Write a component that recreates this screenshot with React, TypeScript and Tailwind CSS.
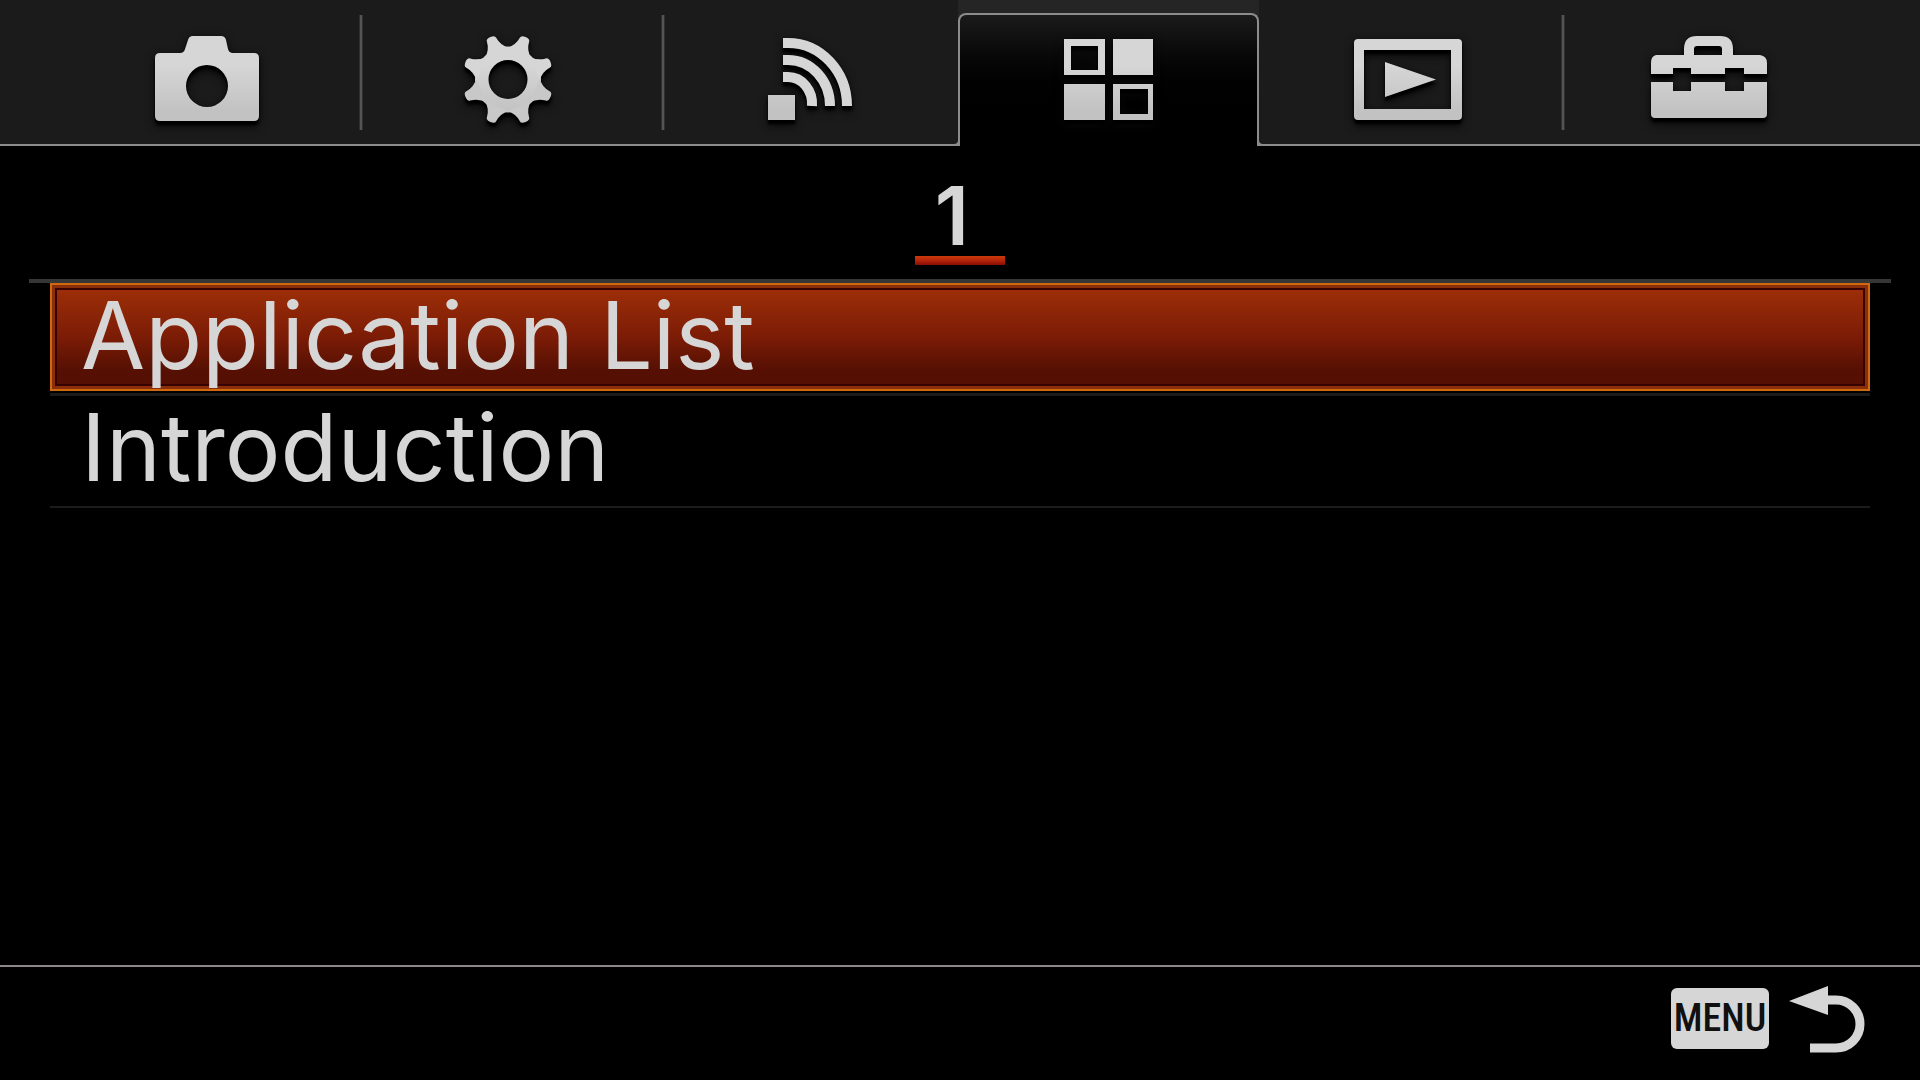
import type { ReactNode } from "react";

const TEETH = [22.5, 67.5, 112.5, 157.5, 202.5, 247.5, 292.5, 337.5];

function TabIcon({ id, children }: { id: string; children: ReactNode }) {
  return (
    <svg
      aria-hidden="true"
      viewBox="0 0 128 104"
      className="h-[104px] w-32 overflow-visible [filter:drop-shadow(0_4px_1px_#000000)_drop-shadow(0_2px_4px_#080808)]"
    >
      <defs>
        <linearGradient id={id} gradientUnits="userSpaceOnUse" x1="0" y1="40" x2="0" y2="86">
          <stop offset="0" stopColor="#d6d6d6" />
          <stop offset="1" stopColor="#c2c2c2" />
        </linearGradient>
      </defs>
      <g fill={`url(#${id})`} fillRule="evenodd">
        {children}
      </g>
    </svg>
  );
}

const TABS: { name: string; icon: ReactNode }[] = [
  {
    name: "Camera Settings",
    icon: (
      <TabIcon id="tab-camera">
        <path d="M17 28H37Q41 28 42 24L45 15Q46 11 50 11H78Q82 11 83 15L85 24Q86 28 90 28H111Q116 28 116 33V91Q116 96 111 96H17Q12 96 12 91V33Q12 28 17 28ZM64 40A21 21 0 1 0 64 82A21 21 0 1 0 64 40Z" />
      </TabIcon>
    ),
  },
  {
    name: "Custom Settings",
    icon: (
      <TabIcon id="tab-gear">
        <path d="M64 21.5A33 33 0 1 0 64 87.5A33 33 0 1 0 64 21.5ZM64 35A19.5 19.5 0 1 1 64 74A19.5 19.5 0 1 1 64 35Z" />
        {TEETH.map((angle) => (
          <path
            key={angle}
            fill={angle > 90 && angle < 270 ? "#c8c8c8" : "#d6d6d6"}
            transform={`translate(64 54.5) rotate(${angle})`}
            d="M-13 -29Q-6 -34 -5 -43Q-5 -46 0 -46Q5 -46 5 -43Q6 -34 13 -29Z"
          />
        ))}
      </TabIcon>
    ),
  },
  {
    name: "Wireless",
    icon: (
      <TabIcon id="tab-wireless">
        <rect x="23" y="70" width="27" height="25" />
        <g fill="none" stroke="#d6d6d6" strokeWidth="10">
          <path d="M38 18H43A59 63 0 0 1 102 81" />
          <path d="M38 35H43A42 46 0 0 1 85 81" />
          <path d="M38 52H43A24 27 0 0 1 67 81" />
        </g>
      </TabIcon>
    ),
  },
  {
    name: "Application",
    icon: (
      <TabIcon id="tab-apps">
        <path d="M19 14H60V50H19ZM26 21V45H53V21ZM68 14H108V50H68ZM19 59H60V95H19ZM68 59H108V95H68ZM75 64V89H103V64Z" />
      </TabIcon>
    ),
  },
  {
    name: "Playback",
    icon: (
      <TabIcon id="tab-playback">
        <path d="M14 14H114Q118 14 118 18V91Q118 95 114 95H14Q10 95 10 91V18Q10 14 14 14ZM20 25V84H107V25ZM41 37L92 54.5L41 72Z" />
      </TabIcon>
    ),
  },
  {
    name: "Setup",
    icon: (
      <TabIcon id="tab-setup">
        <path d="M11 30H39V24Q39 11 52 11H75Q88 11 88 24V30H115Q122 31 122 38V49H99V43H80V49H46V43H28V49H6V38Q6 31 11 30ZM52 21Q49 21 49 24V30H77V24Q77 21 74 21Z" />
        <path d="M6 57H28V66H46V57H80V66H99V57H122V89Q122 93 118 93H10Q6 93 6 89Z" />
      </TabIcon>
    ),
  },
];

function Tab({ name, icon, active, divider }: { name: string; icon: ReactNode; active: boolean; divider: boolean }) {
  if (active) {
    return (
      <div className="relative -mx-0.5 -mb-0.5 flex flex-1 bg-[#252525] pt-[13px]">
        <button
          type="button"
          role="tab"
          aria-selected="true"
          aria-label={name}
          className="flex w-full justify-center rounded-t-lg border-2 border-b-0 border-[#8c8c8c] bg-linear-to-b from-[#1b1b1b] to-black to-80% pt-2.5"
        >
          {icon}
        </button>
        <span className="absolute right-full bottom-0 -mr-0.5 size-2 rounded-br-md border-r-2 border-b-2 border-[#8c8c8c]" />
        <span className="absolute bottom-0 left-full -ml-0.5 size-2 rounded-bl-md border-b-2 border-l-2 border-[#8c8c8c]" />
      </div>
    );
  }
  return (
    <button
      type="button"
      role="tab"
      aria-selected="false"
      aria-label={name}
      className="relative flex flex-1 justify-center pt-[25px]"
    >
      {divider && (
        <span className="absolute top-[15px] bottom-[14px] left-[2px] w-1 border-x border-x-[#303030] bg-[#545454]" />
      )}
      {icon}
    </button>
  );
}

export default function App() {
  return (
    <div className="flex min-h-screen flex-col bg-black font-['Inter',sans-serif] text-[#d6d6d6]">
      <header className="border-b-2 border-[#8c8c8c] bg-[#1b1b1b]">
        <nav role="tablist" aria-label="Menu" className="flex h-36 pr-[60px] pl-14">
          {TABS.map((tab, i) => (
            <Tab
              key={tab.name}
              name={tab.name}
              icon={tab.icon}
              active={i === 3}
              divider={i !== 0 && i !== 3 && i !== 4}
            />
          ))}
        </nav>
      </header>

      <main className="flex-1">
        <div className="flex justify-center pt-[30px]">
          <button type="button" aria-current="page" className="flex w-[90px] flex-col items-center">
            <span className="pr-4 text-[81px] leading-[80px] font-semibold">1</span>
            <span className="h-[9px] w-full bg-linear-to-b from-[#cc3a0a] via-[#b3240a] to-[#8a0a06]" />
          </button>
        </div>

        <div className="mx-[29px] mt-3.5 h-1 bg-[#363636]" />

        <ul className="mx-[50px] text-[93px]">
          <li className="border-b-[3px] border-[#1b1b1b] pb-0.5">
            <button
              type="button"
              className="block w-full border-2 border-[#d0680f] bg-[#8a2f0a] p-[3px] text-left"
            >
              <span className="block border-2 border-[#380202] bg-linear-to-b from-[#9c2e08] via-[#7c1c06] to-[#561003] to-85% pb-1 pl-6 leading-[90px]">
                Application List
              </span>
            </button>
          </li>
          <li className="border-b-2 border-[#1c1c1c]">
            <button type="button" className="block w-full pb-2 pl-[31px] text-left leading-[102px]">
              Introduction
            </button>
          </li>
        </ul>
      </main>

      <footer className="flex h-[115px] items-start justify-end border-t-2 border-[#8c8688] pr-[51px]">
        <button type="button" aria-label="MENU: back" className="flex items-start pt-3.5">
          <span className="mt-[7px] flex h-[61px] w-[98px] items-center justify-center rounded-md bg-[#d6d6d6] font-['Liberation_Sans_Narrow','Roboto_Condensed','Liberation_Sans',sans-serif] text-[38px] font-medium text-[#101010]">
            MENU
          </span>
          <svg aria-hidden="true" viewBox="0 0 84 76" className="ml-4 h-[76px] w-[84px]">
            <path d="M4 20L43 5V34Z" fill="#d6d6d6" />
            <path d="M40 19H51A24 24 0 0 1 51 67H25" fill="none" stroke="#d6d6d6" strokeWidth="9" />
          </svg>
        </button>
      </footer>
    </div>
  );
}
